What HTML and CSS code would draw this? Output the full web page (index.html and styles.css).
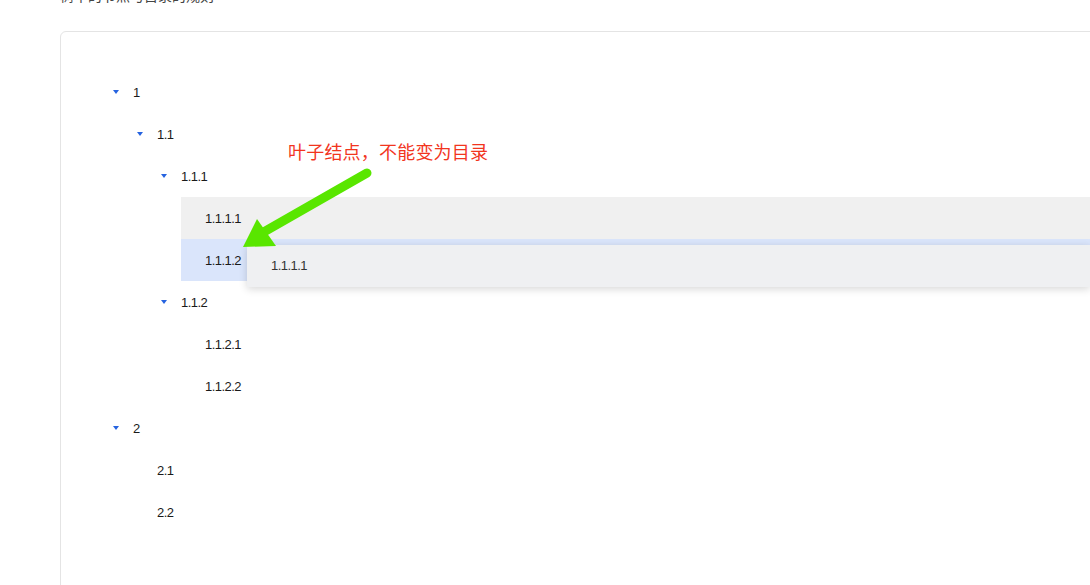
FILE: index.html
```html
<!DOCTYPE html>
<html lang="zh">
<head>
<meta charset="utf-8">
<title>Tree</title>
<link rel="stylesheet" href="styles.css">
</head>
<body>
<div class="page">
  <div class="title">树中的节点与目录的规则</div>
  <div class="card">
    <div class="tree">
      <div class="row"><div class="node l0"><span class="toggle"><i class="caret"></i></span><span class="label">1</span></div></div>
      <div class="row"><div class="node l1"><span class="toggle"><i class="caret"></i></span><span class="label">1.1</span></div></div>
      <div class="row"><div class="node l2"><span class="toggle"><i class="caret"></i></span><span class="label">1.1.1</span></div></div>
      <div class="row"><div class="node l3 hover"><span class="toggle"></span><span class="label">1.1.1.1</span></div></div>
      <div class="row"><div class="node l3 target"><span class="toggle"></span><span class="label">1.1.1.2</span></div></div>
      <div class="row"><div class="node l2"><span class="toggle"><i class="caret"></i></span><span class="label">1.1.2</span></div></div>
      <div class="row"><div class="node l3"><span class="toggle"></span><span class="label">1.1.2.1</span></div></div>
      <div class="row"><div class="node l3"><span class="toggle"></span><span class="label">1.1.2.2</span></div></div>
      <div class="row"><div class="node l0"><span class="toggle"><i class="caret"></i></span><span class="label">2</span></div></div>
      <div class="row"><div class="node l1"><span class="toggle"></span><span class="label">2.1</span></div></div>
      <div class="row"><div class="node l1"><span class="toggle"></span><span class="label">2.2</span></div></div>
    </div>
  </div>
</div>
<div class="ghost">1.1.1.1</div>
<div class="note">叶子结点，不能变为目录</div>
<svg class="arrow" width="1090" height="585" viewBox="0 0 1090 585">
  <line x1="367" y1="173" x2="262" y2="233" stroke="#59e600" stroke-width="9" stroke-linecap="round"/>
  <polygon points="243,247 257,219 276,246" fill="#59e600"/>
</svg>
</body>
</html>
```
FILE: styles.css
```css
html, body {
  margin: 0;
  padding: 0;
  background: #ffffff;
  overflow: hidden;
  width: 1090px;
  height: 585px;
}
body {
  font-family: "Liberation Sans", "Noto Sans CJK SC", sans-serif;
  color: #1f1f1f;
  position: relative;
}
.page {
  padding-left: 60px;
  height: 585px;
  display: flex;
  flex-direction: column;
}
.title {
  font-family: "Noto Sans CJK SC", sans-serif;
  font-size: 14px;
  line-height: 22px;
  margin-top: -16px;
  color: #444;
}
.card {
  flex: 1;
  margin-top: 25px;
  margin-right: -20px;
  margin-bottom: -20px;
  border: 1px solid #e4e4e4;
  border-radius: 6px;
  padding: 39px 0 0 48px;
}
.tree {
  display: flex;
  flex-direction: column;
}
.row {
  display: flex;
  height: 42px;
}
.node {
  flex: 1;
  display: flex;
  align-items: center;
  font-size: 13px;
}
.l1 { margin-left: 24px; }
.l2 { margin-left: 48px; }
.l3 { margin-left: 72px; }
.toggle {
  width: 24px;
  display: flex;
  align-items: center;
  padding-left: 4px;
  box-sizing: border-box;
}
.caret {
  width: 0;
  height: 0;
  border-left: 3px solid transparent;
  border-right: 3px solid transparent;
  border-top: 4px solid #2563e0;
}
.label {
  letter-spacing: -0.55px;
  color: #1a1a1a;
}
.hover {
  background: #f0f0f0;
}
.target {
  background: #dae5fb;
}
.ghost {
  position: absolute;
  left: 247px;
  top: 245px;
  right: 0;
  height: 42px;
  background: #eff0f2;
  box-shadow: 0 2px 8px rgba(0, 0, 0, 0.16);
  font-size: 13px;
  line-height: 42px;
  padding-left: 24px;
  color: #333;
  letter-spacing: -0.55px;
}
.note {
  position: absolute;
  left: 288px;
  top: 140px;
  font-family: "Noto Sans CJK SC", sans-serif;
  font-size: 18px;
  line-height: 22px;
  color: #f2351e;
  letter-spacing: 0.2px;
}
.arrow {
  position: absolute;
  left: 0;
  top: 0;
}
```
